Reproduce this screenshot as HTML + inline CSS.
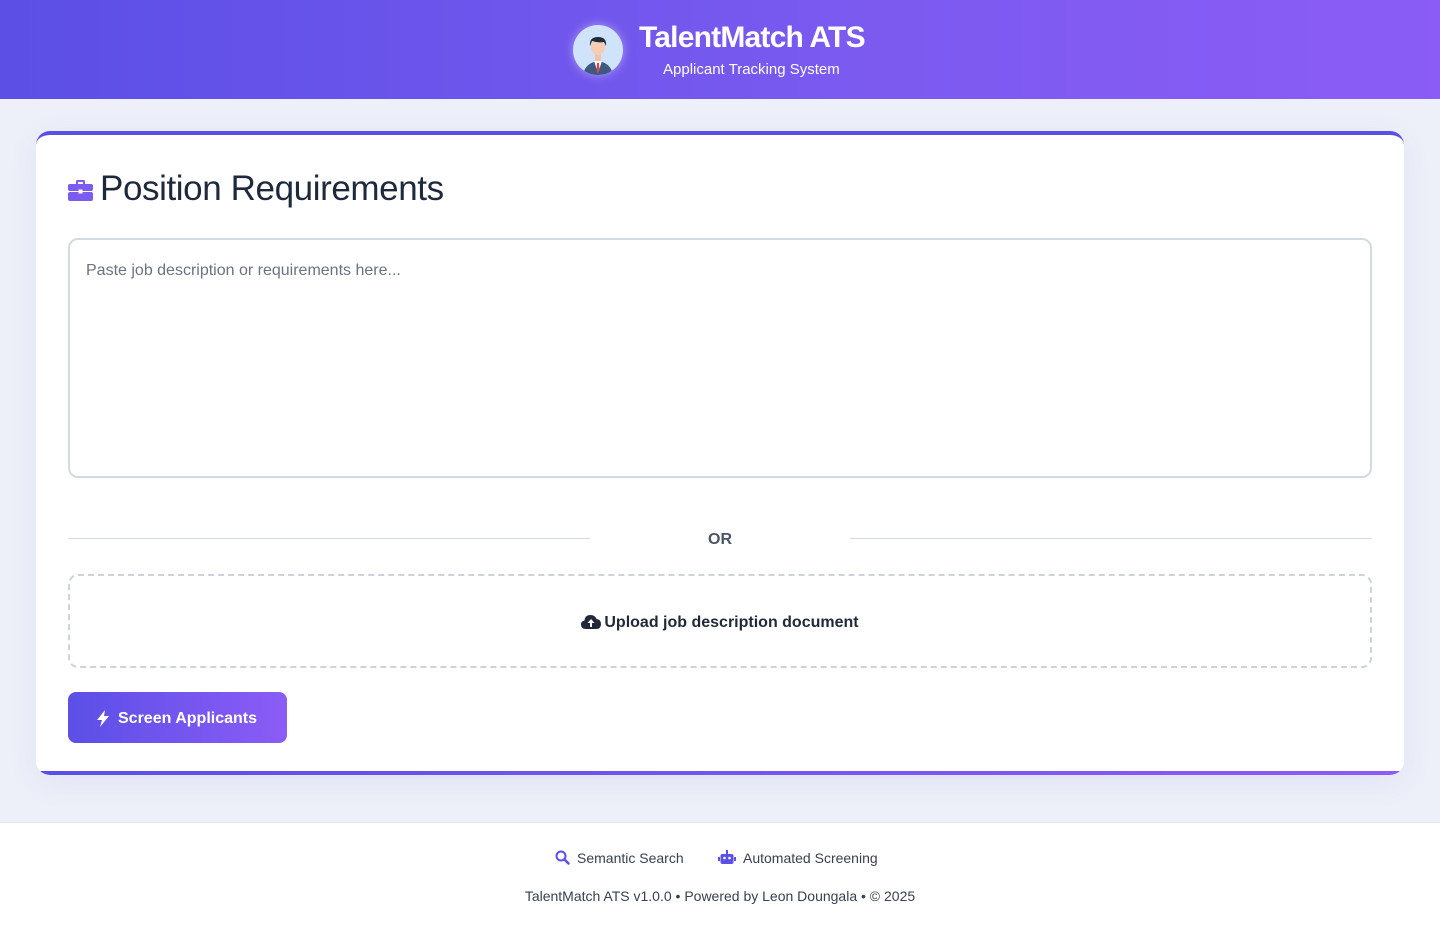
<!DOCTYPE html>
<html><head><meta charset="utf-8"><style>
*{box-sizing:border-box;margin:0;padding:0}
body{width:1440px;height:948px;font-family:"Liberation Sans",sans-serif;background:#edf0f8;position:relative;overflow:hidden;color:#1e293b}
.hdr{position:absolute;left:0;top:0;width:1440px;height:99px;background:linear-gradient(90deg,#5b4fe6,#7b5af0 60%,#8b5cf6)}
.av{position:absolute;left:573px;top:25px;width:50px;height:50px;border-radius:50%;background:#cfe3fb;box-shadow:0 0 10px rgba(255,255,255,.4);overflow:hidden}
.t1{position:absolute;left:639px;top:21px;color:#fff;font-weight:bold;font-size:30px;letter-spacing:-.8px}
.t2{position:absolute;left:663px;top:61px;color:#fff;font-size:15px;letter-spacing:0}
.card{position:absolute;left:36px;top:131px;width:1368px;height:644px;background:#fff;border-radius:14px;border-top:4px solid #5b4fe6;box-shadow:0 8px 30px rgba(91,79,230,.08);overflow:hidden}
.card:after{content:"";position:absolute;left:0;bottom:0;width:100%;height:4px;background:linear-gradient(90deg,#5b4fe6,#8b5cf6)}
h1{position:absolute;left:64px;top:34px;font-size:35px;font-weight:normal;letter-spacing:-.4px;color:#1e293b}
.ta{position:absolute;left:32px;top:103px;width:1304px;height:240px;border:2px solid #d4dae3;border-radius:10px;padding:22px 16px;color:#6b7280;font-size:16px}
.or{position:absolute;left:32px;top:396px;width:1304px;height:20px}
.or .l{position:absolute;top:7px;height:1px;width:522px;background:#d4dae3}
.or span{position:absolute;left:640px;top:0;color:#4b5563;font-size:16px;font-weight:bold}
.up{position:absolute;left:32px;top:439px;width:1304px;height:94px;border:2px dashed #cdd3dc;border-radius:10px;text-align:center;line-height:93px;font-size:16px;font-weight:bold;color:#1f2937}
.btn{position:absolute;left:32px;top:557px;width:219px;height:51px;border-radius:8px;background:linear-gradient(90deg,#5b4fe6,#8b5cf6);color:#fff;font-weight:bold;font-size:16px;line-height:53px;padding-left:50px}
.ft{position:absolute;left:0;top:822px;width:1440px;height:126px;background:#fff;border-top:1px solid #e5e7eb;font-size:14px;color:#374151}
</style></head><body>
<div class="hdr">
<div class="av"><svg width="50" height="50" viewBox="0 0 50 50"><path d="M10 50 Q12 38 25 36 Q38 38 40 50Z" fill="#3d5a80"/><path d="M21 36 L25 48 L29 36Z" fill="#fff"/><path d="M24 38 L26 38 L26.5 46 L25 48 L23.5 46Z" fill="#d9434b"/><rect x="22" y="28" width="6" height="8" fill="#f2c1a7"/><ellipse cx="25" cy="22" rx="7" ry="8" fill="#f6cdb4"/><path d="M17 21 Q16 12 25 12 Q34 12 33 21 L31 17 Q25 18 19 16Z" fill="#1f2d3d"/></svg></div>
<div class="t1">TalentMatch ATS</div>
<div class="t2">Applicant Tracking System</div>
</div>
<div class="card">
<svg style="position:absolute;left:32px;top:44px" width="25" height="22" viewBox="0 0 25 22"><path d="M8 5V2.5Q8 1 9.5 1h6Q17 1 17 2.5V5h-2V3H10v2Z" fill="#7c5cf0"/><rect x="0" y="5" width="25" height="7" rx="2" fill="#7c5cf0"/><rect x="0" y="13" width="25" height="9" rx="2" fill="#7c5cf0"/><rect x="10.5" y="10.5" width="4" height="4" fill="#fff"/></svg>
<h1>Position Requirements</h1>
<div class="ta">Paste job description or requirements here...</div>
<div class="or"><div class="l" style="left:0"></div><div class="l" style="right:0"></div><span>OR</span></div>
<div class="up"><svg width="20" height="15" viewBox="0 0 20 15" style="vertical-align:-2px;margin-right:3px"><path d="M5 15Q0 15 0 10.5Q0 7 3.5 6.5Q4 1 9.5 1Q14 1 15.5 5Q20 5.5 20 10Q20 15 15 15Z" fill="#1f2937"/><path d="M10 5L6.5 9H9V13H11V9H13.5Z" fill="#fff"/></svg>Upload job description document</div>
<div class="btn"><svg width="14" height="17" viewBox="0 0 14 17" style="position:absolute;left:28px;top:18px"><path d="M9 0L1 10H6L4 17L13 6H8Z" fill="#fff"/></svg>Screen Applicants</div>
</div>
<div class="ft">
<div style="position:absolute;left:555px;top:27px"><svg width="15" height="15" viewBox="0 0 15 15" style="vertical-align:-2px"><circle cx="6" cy="6" r="4.5" stroke="#5b4fe6" stroke-width="2" fill="none"/><path d="M9.5 9.5L13.5 13.5" stroke="#5b4fe6" stroke-width="2.4" stroke-linecap="round"/></svg><span style="margin-left:7px">Semantic Search</span></div>
<div style="position:absolute;left:718px;top:27px"><svg width="18" height="15" viewBox="0 0 18 15" style="vertical-align:-2px"><rect x="2.5" y="4" width="13" height="10" rx="2" fill="#5b4fe6"/><rect x="0" y="7" width="2" height="4" fill="#5b4fe6"/><rect x="16" y="7" width="2" height="4" fill="#5b4fe6"/><rect x="8" y="0" width="2" height="4" fill="#5b4fe6"/><circle cx="6.5" cy="8" r="1.3" fill="#fff"/><circle cx="11.5" cy="8" r="1.3" fill="#fff"/></svg><span style="margin-left:7px">Automated Screening</span></div>
<div style="position:absolute;left:0;width:1440px;top:65px;text-align:center">TalentMatch ATS v1.0.0 • Powered by Leon Doungala • © 2025</div>
</div>
</body></html>
